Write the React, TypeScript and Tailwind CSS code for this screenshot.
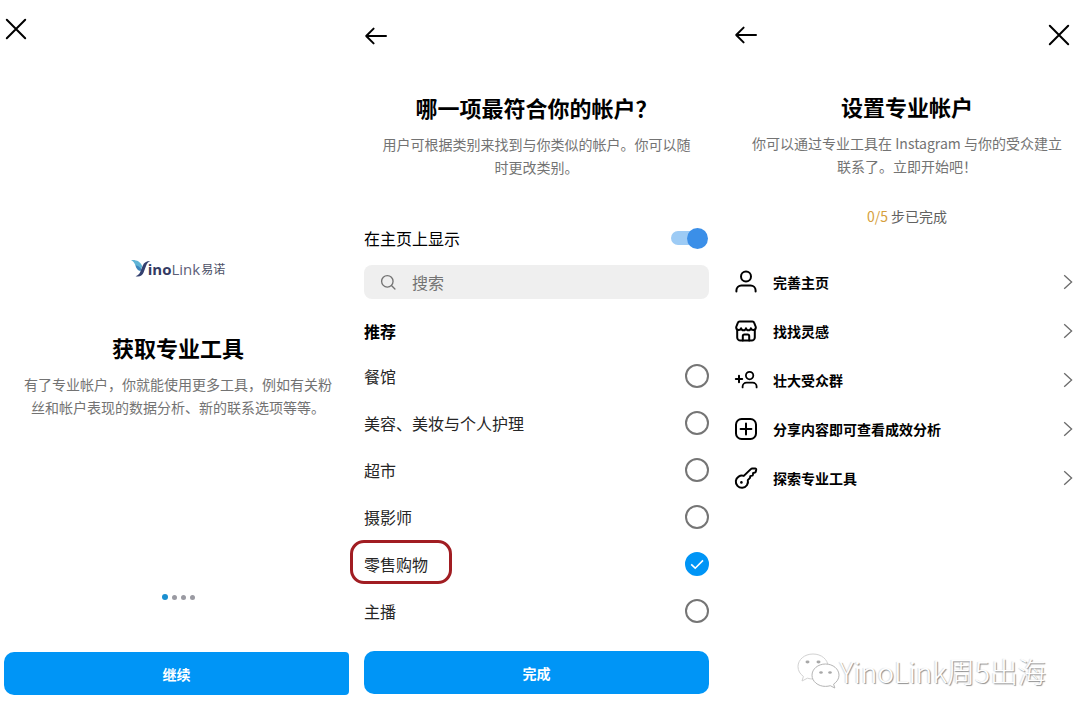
import React, { useState } from 'react';

interface IconProps {
  className?: string;
}

interface Step {
  id: string;
  label: string;
  icon: (props: IconProps) => React.ReactElement;
}

const categories = ['餐馆', '美容、美妆与个人护理', '超市', '摄影师', '零售购物', '主播'];

const HIGHLIGHTED = '零售购物';

const strokeProps = {
  viewBox: '0 0 24 24',
  fill: 'none',
  stroke: 'currentColor',
  strokeWidth: 2,
  strokeLinecap: 'round' as const,
  strokeLinejoin: 'round' as const,
  'aria-hidden': true,
};

function CloseIcon() {
  return (
    <svg {...strokeProps} className="w-6 h-6">
      <path d="M2.8 2.8l18.4 18.4M21.2 2.8L2.8 21.2" />
    </svg>
  );
}

function BackIcon() {
  return (
    <svg {...strokeProps} className="w-6 h-6">
      <path d="M22 12H2.2M9.6 4.6L2.2 12l7.4 7.4" />
    </svg>
  );
}

function SearchIcon({ className }: IconProps) {
  return (
    <svg {...strokeProps} className={className}>
      <circle cx="11" cy="11" r="8.6" />
      <path d="M17.2 17.2l5.2 5.2" />
    </svg>
  );
}

function ChevronIcon() {
  return (
    <svg viewBox="0 0 10 16" fill="none" stroke="currentColor" strokeWidth="1.3" className="w-[10px] h-4 text-[#6b6b6b]" aria-hidden="true">
      <path d="M1.2 1.2L8.6 8l-7.4 6.8" />
    </svg>
  );
}

function PersonIcon({ className }: IconProps) {
  return (
    <svg {...strokeProps} className={className}>
      <circle cx="12" cy="6.4" r="5" />
      <path d="M2.4 21.6v-1.2a5 5 0 0 1 5-5h9.2a5 5 0 0 1 5 5v1.2" />
    </svg>
  );
}

function StoreIcon({ className }: IconProps) {
  return (
    <svg {...strokeProps} className={className}>
      <path d="M3.2 11.4v7a3.2 3.2 0 0 0 3.2 3.2h11.200a3.200 3.200 0 0 0 3.200-3.200v-7" />
      <path d="M5.600 2.400h12.800a1.800 1.800 0 0 1 1.700 1.200L21.800 8v.6a2.500 2.500 0 0 1-4.900.6 2.500 2.500 0 0 1-4.900 0 2.500 2.500 0 0 1-4.900 0 2.500 2.500 0 0 1-4.900-.6V8l1.700-4.400a1.800 1.800 0 0 1 1.700-1.200z" />
      <path d="M8.800 21.400v-4.400a1.600 1.600 0 0 1 1.600-1.600h3.200a1.600 1.600 0 0 1 1.600 1.600v4.400" />
    </svg>
  );
}

function AddPersonIcon({ className }: IconProps) {
  return (
    <svg {...strokeProps} strokeWidth={1.8} className={className}>
      <circle cx="15.6" cy="7.6" r="3.7" />
      <path d="M8.600 19.400v-.8a4 4 0 0 1 4-4h6a4 4 0 0 1 4 4v.8" />
      <path d="M1.800 11h6.400M5 7.800v6.400" strokeWidth={2} />
    </svg>
  );
}

function SquarePlusIcon({ className }: IconProps) {
  return (
    <svg {...strokeProps} className={className}>
      <rect x="2" y="2" width="20" height="20" rx="5.6" />
      <path d="M6.6 12h10.8M12 6.6v10.8" />
    </svg>
  );
}

function KeyIcon({ className }: IconProps) {
  return (
    <svg {...strokeProps} className={className}>
      <path d="M9.800 9.900l7-6.800a2 2 0 0 1 1.400-.6h3a1 1 0 0 1 1 1.200l-.5 2.100a1 1 0 0 1-.8.8l-1.700.4-.4 1.900a1 1 0 0 1-.7.7l-1.800.5-.3 1.800-2.200 2.200a6.100 6.100 0 1 1-4-4.200z" />
      <circle cx="7.400" cy="16.400" r="1.300" fill="currentColor" stroke="none" />
    </svg>
  );
}

function WeChatIcon() {
  return (
    <svg viewBox="0 0 44 38" fill="#fff" stroke="#b5b5b5" strokeWidth="1" className="w-11 h-[38px]" aria-hidden="true">
      <path d="M17 2C8.500 2 2 7.600 2 14.600c0 4 2 7.400 5.400 9.800L6 29l5.400-2.800c1.800.5 3.700.8 5.600.8 8.500 0 15-5.600 15-12.500S25.500 2 17 2z" stroke="#d2d2d2" />
      <path d="M29.500 12C22 12 16 17 16 23.200s6 11.200 13.500 11.200c1.700 0 3.300-.3 4.800-.7l4.500 2.300-1.200-3.900c3.300-2.100 5.400-5.300 5.400-8.900C43 17 37 12 29.500 12z" />
      <g fill="#a8a8a8" stroke="none">
        <ellipse cx="11.500" cy="10" rx="2" ry="1.400" />
        <ellipse cx="22.500" cy="10" rx="2" ry="1.400" />
        <ellipse cx="25" cy="20.500" rx="1.800" ry="1.200" />
        <ellipse cx="34" cy="20.500" rx="1.800" ry="1.200" />
      </g>
    </svg>
  );
}

const steps: Step[] = [
  { id: 'profile', label: '完善主页', icon: PersonIcon },
  { id: 'inspiration', label: '找找灵感', icon: StoreIcon },
  { id: 'audience', label: '壮大受众群', icon: AddPersonIcon },
  { id: 'insights', label: '分享内容即可查看成效分析', icon: SquarePlusIcon },
  { id: 'tools', label: '探索专业工具', icon: KeyIcon },
];

function Logo() {
  return (
    <div className="flex items-center justify-center h-6">
      <svg viewBox="0 0 20 20" className="w-5 h-5" aria-hidden="true">
        <path d="M0 1c5-.6 9.600 1.300 11.200 6.200L9.800 11C7.600 9.800 5.600 8.600 4.400 6.200 3.600 4.200 2.200 2.200 0 1z" fill="#5fb4d6" />
        <path d="M4.400 6.200c2.500.4 4.800 1.800 6.200 4.300l-1.200 1.600C7 11.400 5 9.400 4.400 6.200z" fill="#3c86bd" />
        <path d="M19.400 2c-3.500-.2-6.400 1.400-7.600 4.600L9.200 13c-.8 2-2.200 3.400-4.600 4.200 3.600 1 6.600-.2 8-3.600l2.600-7c.8-2.200 2-3.800 4.200-4.600z" fill="#34406f" />
      </svg>
      <span className="-ml-[3px] font-['Open_Sans','Noto_Sans_CJK_SC',sans-serif] text-[15px] leading-6 text-[#5c6078]">
        <b className="text-[#343a63]">ino</b>Link
      </span>
      <span className="ml-px text-xs leading-6 text-[#4b4f66]">易诺</span>
    </div>
  );
}

function IntroScreen() {
  return (
    <section className="flex flex-col pt-[17px] pb-[25px] pl-1">
      <header className="flex">
        <button type="button" aria-label="关闭">
          <CloseIcon />
        </button>
      </header>

      <div className="mt-[216px] pr-2 text-center">
        <Logo />
        <h1 className="mt-[52px] text-[22px] leading-7 font-bold">获取专业工具</h1>
        <p className="mt-3 mx-auto max-w-[312px] text-sm leading-[23px] text-[#737373]">
          有了专业帐户，你就能使用更多工具，例如有关粉丝和帐户表现的数据分析、新的联系选项等等。
        </p>
      </div>

      {/* Page dots */}
      <div className="mt-auto mb-[52px] pr-2 flex items-center justify-center gap-1">
        <span className="w-[6px] h-[6px] rounded-full bg-[#1a8fd0]" />
        <span className="w-[5px] h-[5px] rounded-full bg-[#9a9aa2]" />
        <span className="w-[5px] h-[5px] rounded-full bg-[#9a9aa2]" />
        <span className="w-[5px] h-[5px] rounded-full bg-[#9a9aa2]" />
      </div>
      <button type="button" className="mr-[11px] h-[43px] rounded-l-[10px] rounded-r-[4px] bg-[#0095f6] text-sm font-bold text-white">
        继续
      </button>
    </section>
  );
}

function CategoryScreen() {
  const [selected, setSelected] = useState(HIGHLIGHTED);
  const [visible, setVisible] = useState(true);

  return (
    <section className="flex flex-col pt-6 pb-[26px] pl-1 pr-[11px]">
      <header className="flex">
        <button type="button" aria-label="返回">
          <BackIcon />
        </button>
      </header>

      <div className="mt-[45px] text-center">
        <h2 className="text-[22px] leading-7 font-bold">哪一项最符合你的帐户？</h2>
        <p className="mt-3 mx-auto max-w-[312px] text-sm leading-[23px] text-[#737373]">
          用户可根据类别来找到与你类似的帐户。你可以随时更改类别。
        </p>
      </div>

      <label className="mt-[47px] flex items-center justify-between h-6 text-base">
        在主页上显示
        <span className="relative flex items-center w-[38px] h-6">
          <input
            type="checkbox"
            role="switch"
            checked={visible}
            onChange={(e) => setVisible(e.target.checked)}
            className="peer appearance-none w-8 h-[14px] rounded-full bg-[#cfcfcf] checked:bg-[#9dcbf5]"
          />
          <span className="absolute left-0 w-[21px] h-[21px] rounded-full bg-[#8a8a8a] peer-checked:left-4 peer-checked:bg-[#3b8fe8]" />
        </span>
      </label>

      <label className="mt-[15px] flex items-center gap-4 h-[34px] px-4 rounded-lg bg-[#efefef]">
        <SearchIcon className="w-4 h-4 text-[#737373]" />
        <input
          type="search"
          aria-label="搜索"
          placeholder="搜索"
          className="min-w-0 flex-1 bg-transparent text-base outline-none placeholder:text-[#737373]"
        />
      </label>

      <fieldset>
        <legend className="pt-5 text-base leading-6 font-bold">推荐</legend>
        <div className="mt-[9px]">
          {categories.map((name) => (
            <label key={name} className="flex items-center justify-between h-[47px] text-base text-[#262626]">
              <span className="relative">
                {name}
                {name === HIGHLIGHTED && (
                  <span className="absolute -left-[14px] -right-6 -top-3 -bottom-2 rounded-[14px] border-[3px] border-[#a11d22]" />
                )}
              </span>
              <span className="relative flex">
                <input
                  type="radio"
                  name="category"
                  value={name}
                  checked={selected === name}
                  onChange={() => setSelected(name)}
                  className="appearance-none w-6 h-6 rounded-full border-2 border-[#757575] checked:border-[#0095f6] checked:bg-[#0095f6]"
                />
                {selected === name && (
                  <svg viewBox="0 0 24 24" className="absolute inset-0 w-6 h-6" fill="none" stroke="#fff" strokeWidth="1.6" aria-hidden="true">
                    <path d="M6.200 12.400l4 3.800 7.800-7.800" />
                  </svg>
                )}
              </span>
            </label>
          ))}
        </div>
      </fieldset>

      <button type="button" className="mt-auto h-[43px] w-full rounded-[10px] bg-[#0095f6] text-sm font-bold text-white">
        完成
      </button>
    </section>
  );
}

function SetupScreen() {
  return (
    <section className="relative flex flex-col pt-[23px] pl-[14px]">
      <header className="flex justify-between pr-[9px]">
        <button type="button" aria-label="返回">
          <BackIcon />
        </button>
        <button type="button" aria-label="关闭">
          <CloseIcon />
        </button>
      </header>

      <div className="mt-[45px] text-center">
        <h2 className="text-[22px] leading-7 font-bold">设置专业帐户</h2>
        <p className="mt-3 mx-auto max-w-[312px] text-sm leading-[23px] text-[#737373]">
          你可以通过专业工具在 Instagram 与你的受众建立联系了。立即开始吧！
        </p>
        <p className="mt-7 text-sm leading-5 text-[#616161]">
          <span className="text-[#d6a03c]">0/5</span> 步已完成
        </p>
      </div>

      <ul className="mt-[31px] pr-[7px]">
        {steps.map((step) => {
          const Icon = step.icon;
          return (
            <li key={step.id}>
              <button type="button" className="flex items-center w-full h-[49px] text-left">
                <Icon className="w-6 h-6" />
                <span className="ml-[15px] flex-1 text-sm font-bold">{step.label}</span>
                <ChevronIcon />
              </button>
            </li>
          );
        })}
      </ul>

      {/* Watermark */}
      <div className="absolute right-[34px] bottom-[30px] flex items-center whitespace-nowrap">
        <WeChatIcon />
        <span className="text-[28px] leading-9 font-light text-white [text-shadow:1px_1px_1px_#8c8c8c,-1px_0_1px_#dcdcdc]">
          YinoLink周5出海
        </span>
      </div>
    </section>
  );
}

export default function App() {
  return (
    <main
      lang="zh-CN"
      className="grid grid-cols-3 min-h-screen bg-white text-black font-['Noto_Sans_CJK_SC',sans-serif]"
    >
      <IntroScreen />
      <CategoryScreen />
      <SetupScreen />
    </main>
  );
}
